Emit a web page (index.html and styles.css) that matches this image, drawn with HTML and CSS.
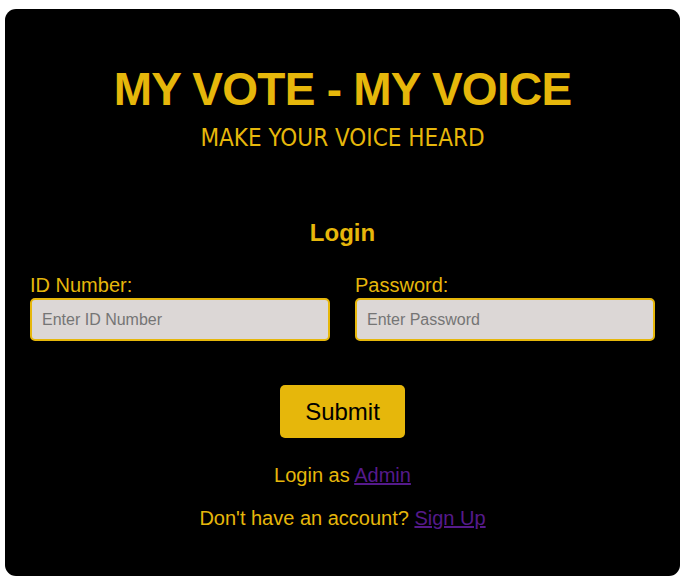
FILE: index.html
```html
<!DOCTYPE html>
<html lang="en">
<head>
<meta charset="utf-8">
<title>My Vote - My Voice</title>
<link rel="stylesheet" href="styles.css">
</head>
<body>
<main class="card">
  <h1 class="title">MY VOTE - MY VOICE</h1>
  <p class="subtitle">MAKE YOUR VOICE HEARD</p>
  <form class="login-form" onsubmit="return false;">
    <h2 class="form-title">Login</h2>
    <div class="fields">
      <div class="field">
        <label class="field-label" for="idnum">ID Number:</label>
        <input class="field-input" id="idnum" type="text" placeholder="Enter ID Number">
      </div>
      <div class="field">
        <label class="field-label" for="pwd">Password:</label>
        <input class="field-input" id="pwd" type="password" placeholder="Enter Password">
      </div>
    </div>
    <div class="actions">
      <button class="submit-btn" type="submit">Submit</button>
    </div>
    <p class="note note-admin">Login as <a class="link" href="#admin">Admin</a></p>
    <p class="note note-signup">Don't have an account? <a class="link" href="#signup">Sign Up</a></p>
  </form>
</main>
</body>
</html>
```
FILE: styles.css
```css
* { box-sizing: border-box; }
html, body { background: #ffffff; }
body {
  margin: 0;
  font-family: "Liberation Sans", Arial, sans-serif;
}
.card {
  margin: 9px 8px 9px 5px;
  width: 675px;
  height: 567px;
  background: #000000;
  border-radius: 11px;
  padding: 54px 25px 0 25px;
  color: #e6b70b;
  text-align: center;
}
.title {
  margin: 0;
  font-size: 46px;
  line-height: 52px;
  font-weight: 700;
  letter-spacing: -0.75px;
}
.subtitle {
  margin: 8px 0 0;
  font-family: "Liberation Sans Narrow", "DejaVu Sans", sans-serif;
  font-stretch: condensed;
  font-size: 24px;
  line-height: 30px;
}
.login-form { margin: 0; }
.form-title {
  margin: 65px 0 0;
  font-size: 24px;
  line-height: 30px;
  font-weight: 700;
}
.fields {
  margin-top: 25px;
  display: flex;
  gap: 25px;
  text-align: left;
}
.field {
  flex: 1;
  display: flex;
  flex-direction: column;
}
.field-label {
  font-size: 20px;
  line-height: 23.5px;
  padding-top: 1px;
}
.field-input {
  height: 43px;
  width: 100%;
  border: 2px solid #e6b70b;
  border-radius: 5px;
  background: #dcd7d6;
  padding: 2px 10px 0;
  font-family: "Liberation Sans", Arial, sans-serif;
  font-size: 16px;
  color: #222;
  outline: none;
}
.field-input::placeholder { color: #757575; }
.actions {
  margin-top: 44px;
  display: flex;
  justify-content: center;
}
.submit-btn {
  width: 125px;
  height: 53px;
  border: none;
  border-radius: 5px;
  background: #e6b70b;
  color: #000000;
  font-family: "Liberation Sans", Arial, sans-serif;
  font-size: 24px;
  padding: 2px 0 0;
  cursor: pointer;
}
.note {
  margin: 0;
  font-size: 20px;
  line-height: 24px;
}
.note-admin { margin-top: 25px; }
.note-signup { margin-top: 19px; }
.link { color: #551a8b; text-decoration: underline; }
```
